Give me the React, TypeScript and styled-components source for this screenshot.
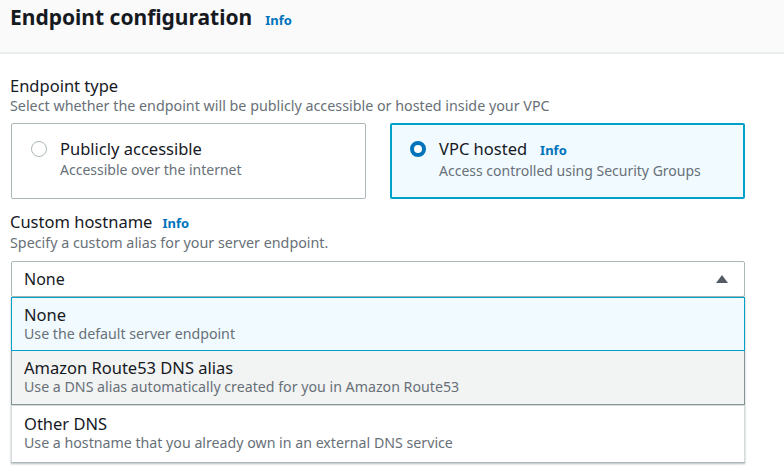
import styled, { createGlobalStyle } from "styled-components";

const GlobalStyle = createGlobalStyle`
  html, body {
    margin: 0;
    padding: 0;
    background: #ffffff;
    font-family: "Noto Sans", "Open Sans", sans-serif;
    color: #16191f;
  }
`;

interface RadioOption {
  label: string;
  description: string;
  checked: boolean;
  info?: boolean;
}

interface SelectOption {
  label: string;
  description: string;
  state: "selected" | "hover" | "normal";
}

const endpointTypes: RadioOption[] = [
  {
    label: "Publicly accessible",
    description: "Accessible over the internet",
    checked: false,
  },
  {
    label: "VPC hosted",
    description: "Access controlled using Security Groups",
    checked: true,
    info: true,
  },
];

const hostnameOptions: SelectOption[] = [
  { label: "None", description: "Use the default server endpoint", state: "selected" },
  {
    label: "Amazon Route53 DNS alias",
    description: "Use a DNS alias automatically created for you in Amazon Route53",
    state: "hover",
  },
  {
    label: "Other DNS",
    description: "Use a hostname that you already own in an external DNS service",
    state: "normal",
  },
];

function App() {
  return (
    <>
      <GlobalStyle />
      <Page>
        <Header>
          <Title>Endpoint configuration</Title>
          <InfoLink>Info</InfoLink>
        </Header>

        <Body>
          <Field>
            <Label>Endpoint type</Label>
            <Description>
              Select whether the endpoint will be publicly accessible or hosted inside your VPC
            </Description>
            <Tiles>
              {endpointTypes.map((option) => (
                <Tile key={option.label} $checked={option.checked}>
                  <Radio $checked={option.checked} />
                  <TileText>
                    <TileLabel>
                      {option.label}
                      {option.info && <InfoLink>Info</InfoLink>}
                    </TileLabel>
                    <TileDescription>{option.description}</TileDescription>
                  </TileText>
                </Tile>
              ))}
            </Tiles>
          </Field>

          <Field>
            <Label>
              Custom hostname <InfoLink>Info</InfoLink>
            </Label>
            <Description>Specify a custom alias for your server endpoint.</Description>
            <SelectWrap>
              <SelectTrigger>
                <span>None</span>
                <svg width="14" height="10" viewBox="0 0 14 10">
                  <path d="M7 1 L13 9 L1 9 Z" fill="#545b64" />
                </svg>
              </SelectTrigger>
              <Dropdown>
                {hostnameOptions.map((option) => (
                  <OptionRow key={option.label} $state={option.state}>
                    <OptionLabel>{option.label}</OptionLabel>
                    <OptionDescription>{option.description}</OptionDescription>
                  </OptionRow>
                ))}
              </Dropdown>
            </SelectWrap>
          </Field>
        </Body>
      </Page>
    </>
  );
}

export default App;

const Page = styled.div`
  width: 784px;
  height: 469px;
  overflow: hidden;
  background: #ffffff;
`;

// header styles
const Header = styled.div`
  height: 54px;
  box-sizing: border-box;
  padding: 3px 10px 0 10px;
  display: flex;
  align-items: baseline;
  gap: 9px;
  background: #fafafa;
  border-bottom: 2px solid #eaeded;
`;

const Title = styled.h2`
  margin: 0;
  font-size: 21px;
  font-weight: 700;
  line-height: 28px;
  color: #16191f;
`;

const InfoLink = styled.span`
  font-size: 13px;
  font-weight: 700;
  color: #0073bb;
  margin-left: 4px;
`;

// body styles
const Body = styled.div`
  padding: 22px 11px 0 10px;
  display: flex;
  flex-direction: column;
  gap: 13px;
`;

const Field = styled.div`
  display: flex;
  flex-direction: column;
`;

const Label = styled.div`
  font-size: 16.5px;
  line-height: 20px;
  color: #16191f;
  display: flex;
  align-items: baseline;
  gap: 6px;
`;

const Description = styled.div`
  font-size: 14.3px;
  line-height: 18px;
  color: #687078;
  margin-top: 1px;
  margin-bottom: 8px;
`;

const Tiles = styled.div`
  display: grid;
  grid-template-columns: 355px 355px;
  gap: 24px;
  padding-left: 1px;
`;

const Tile = styled.div<{ $checked: boolean }>`
  height: 76px;
  box-sizing: border-box;
  display: flex;
  align-items: flex-start;
  gap: 13px;
  border-radius: 2px;
  border: ${(props) => (props.$checked ? "2px solid #00a1c9" : "1px solid #aab7b8")};
  background: ${(props) => (props.$checked ? "#f1faff" : "#ffffff")};
  padding: ${(props) => (props.$checked ? "14px 18px" : "15px 19px")};
`;

const Radio = styled.div<{ $checked: boolean }>`
  flex: none;
  width: 16px;
  height: 16px;
  margin-top: 2px;
  box-sizing: border-box;
  border-radius: 50%;
  background: #ffffff;
  border: ${(props) => (props.$checked ? "4.5px solid #0073bb" : "1.5px solid #aab7b8")};
`;

const TileText = styled.div`
  display: flex;
  flex-direction: column;
`;

const TileLabel = styled.div`
  font-size: 16.5px;
  line-height: 20px;
  color: #16191f;
  display: flex;
  align-items: baseline;
  gap: 9px;
`;

const TileDescription = styled.div`
  font-size: 14px;
  line-height: 22px;
  color: #687078;
`;

// select styles
const SelectWrap = styled.div`
  margin-top: 1px;
  width: 734px;
  margin-left: 1px;
  display: flex;
  flex-direction: column;
`;

const SelectTrigger = styled.div`
  height: 36px;
  box-sizing: border-box;
  border: 1px solid #aab7b8;
  border-radius: 2px;
  display: flex;
  align-items: center;
  justify-content: space-between;
  padding: 0 15px 0 12px;
  font-size: 16px;
  color: #16191f;
`;

const Dropdown = styled.div`
  display: flex;
  flex-direction: column;
  background: #ffffff;
  border-bottom: 1px solid #aab7b8;
  box-shadow: 0 1px 2px rgba(0, 28, 36, 0.3);
`;

const OptionRow = styled.div<{ $state: SelectOption["state"] }>`
  height: 54px;
  box-sizing: border-box;
  padding: 6px 12px 0 12px;
  display: flex;
  flex-direction: column;
  border: 1px solid
    ${(props) =>
      props.$state === "selected"
        ? "#00a1c9"
        : props.$state === "hover"
        ? "#879596"
        : "#d5dbdb"};
  border-top-width: ${(props) => (props.$state === "hover" ? "0" : "1px")};
  border-bottom-width: ${(props) => (props.$state === "normal" ? "0" : "1px")};
  background: ${(props) =>
    props.$state === "selected"
      ? "#f1faff"
      : props.$state === "hover"
      ? "#f2f3f3"
      : "#ffffff"};
  &:last-child {
    height: 57px;
    padding-top: 7px;
  }
`;

const OptionLabel = styled.div`
  font-size: 16.5px;
  line-height: 22px;
  color: #16191f;
`;

const OptionDescription = styled.div`
  font-size: 14.2px;
  line-height: 16px;
  color: #687078;
`;
